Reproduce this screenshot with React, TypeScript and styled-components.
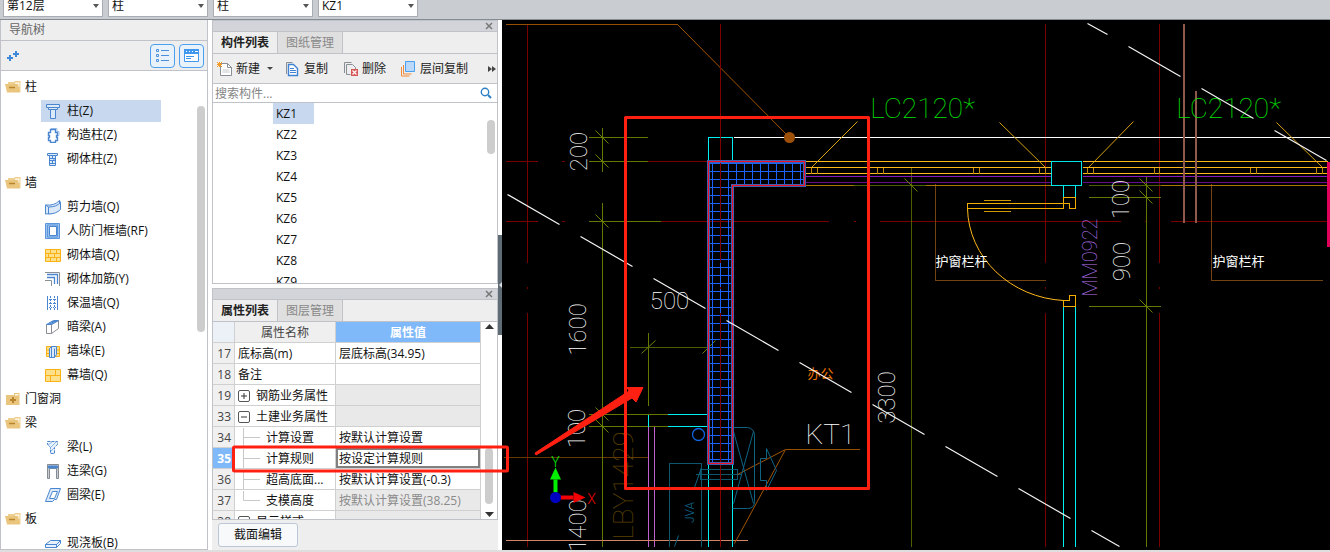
import React from "react";
import styled, { createGlobalStyle, css } from "styled-components";

const uiFont = `"Open Sans", "Noto Sans", "Noto Sans CJK SC", sans-serif`;
const cadFont = `Roboto, "Noto Sans CJK SC", sans-serif`;
const line = "#bfc2c9";

const GlobalStyle = createGlobalStyle`
  * { box-sizing: border-box; }
  body { margin: 0; background: #fff; }
  body, button, input, select, table { font-family: ${uiFont}; font-size: 12px; line-height: 16px; color: #111; }
  button { border: 0; background: none; padding: 0; margin: 0; }
  ul { list-style: none; margin: 0; padding: 0; }
  h2 { margin: 0; font-size: 12px; font-weight: 400; }
`;

/* ---------- shell ---------- */
const Shell = styled.div`
  height: 100vh;
  display: flex;
  flex-direction: column;
  overflow: hidden;
`;
const TopBar = styled.header`
  flex: 0 0 20px;
  display: flex;
  align-items: flex-end;
  gap: 5px;
  padding: 0 3px 2px;
  background: #c9ccd1;
  border-bottom: 1px solid #858b93;
  overflow: hidden;
`;
const Picker = styled.label`
  position: relative;
  flex: 0 0 100px;
  height: 22px;
`;
const Select = styled.select`
  appearance: none;
  width: 100%;
  height: 22px;
  padding: 0 16px 0 3px;
  border: 1px solid #a9acb2;
  border-radius: 0;
  background: #fff;
`;
const PickerArrow = styled.svg`
  position: absolute;
  right: 4px;
  top: 9px;
  pointer-events: none;
`;
const Main = styled.main`
  position: relative;
  flex: 1;
  min-height: 0;
  display: flex;
  border-bottom: 2px solid #dedede;
`;

/* ---------- navigation tree ---------- */
const NavPanel = styled.section`
  flex: 0 0 208px;
  display: flex;
  flex-direction: column;
  border: 1px solid ${line};
  border-top: 0;
`;
const NavTitle = styled.h2`
  flex: 0 0 21px;
  padding: 2px 8px;
  background: #eeeeee;
  border-bottom: 1px solid ${line};
  color: #666;
`;
const NavTools = styled.div`
  flex: 0 0 30px;
  display: flex;
  align-items: center;
  gap: 4px;
  padding: 0 3px 0 6px;
  background: #eeeeee;
  border-bottom: 1px solid ${line};
`;
const Spacer = styled.span`
  flex: 1;
`;
const ViewToggle = styled.button`
  width: 25px;
  height: 24px;
  display: grid;
  place-items: center;
  border: 1px solid #4a9fee;
  border-radius: 4px;
  background: #e9f2fb;
`;
const TreeArea = styled.div`
  position: relative;
  flex: 1;
  min-height: 0;
  overflow: hidden;
  padding-top: 4px;
`;
const TreeGroup = styled.div`
  display: flex;
  align-items: center;
  gap: 4px;
  height: 24px;
  padding-left: 4px;
`;
const TreeList = styled.ul`
  display: flex;
  flex-direction: column;
`;
const TreeItem = styled.li<{ $selected?: boolean }>`
  display: flex;
  align-items: center;
  gap: 6px;
  height: 22px;
  width: 120px;
  margin: 1px 0 1px 40px;
  padding-left: 4px;
  white-space: nowrap;
  background: ${(p) => (p.$selected ? "#c8d9ef" : "transparent")};
`;
const Thumb = styled.div<{ $top: number; $height: number }>`
  position: absolute;
  right: 2px;
  top: ${(p) => p.$top}px;
  width: 8px;
  height: ${(p) => p.$height}px;
  border-radius: 4px;
  background: #cdcdcd;
`;

/* ---------- docks ---------- */
const DockColumn = styled.div`
  flex: 0 0 286px;
  margin-left: 4px;
  display: flex;
  flex-direction: column;
  gap: 4px;
`;
const Dock = styled.section<{ $grow: number }>`
  flex: ${(p) => p.$grow} 1 0;
  min-height: 0;
  display: flex;
  flex-direction: column;
`;
const DockBar = styled.div`
  flex: 0 0 12px;
  display: flex;
  justify-content: flex-end;
  align-items: center;
  padding-right: 4px;
  background: #d2d4da;
  border: 1px solid ${line};
`;
const CloseButton = styled.button`
  display: flex;
`;
const Tabs = styled.div`
  flex: 0 0 22px;
  display: flex;
  background: #eeeeee;
  border: 1px solid ${line};
  border-top: 0;
`;
const Tab = styled.button<{ $active?: boolean }>`
  width: 65px;
  border-right: 1px solid ${line};
  ${(p) =>
    p.$active
      ? css`
          font-weight: 600;
          color: #222;
        `
      : css`
          color: #888;
          background: #dfdfdf;
        `}
`;
const Toolbar = styled.div`
  flex: 0 0 30px;
  display: flex;
  align-items: center;
  gap: 12px;
  padding: 0 1px 0 4px;
  background: #eeeeee;
  border: 1px solid ${line};
  border-top: 0;
`;
const ToolButton = styled.button`
  display: flex;
  align-items: center;
  gap: 3px;
  min-width: 46px;
  white-space: nowrap;
  color: #222;
`;
const MoreButton = styled.button`
  display: flex;
  margin-left: auto;
`;
const Search = styled.label`
  flex: 0 0 19px;
  display: flex;
  align-items: center;
  padding: 0 5px 0 2px;
  border: 1px solid ${line};
  border-top: 0;
`;
const SearchInput = styled.input`
  flex: 1;
  min-width: 0;
  height: 18px;
  padding: 0;
  border: 0;
  outline: 0;
  background: none;
  &::placeholder { color: #858585; opacity: 1; }
`;
const ListArea = styled.div`
  position: relative;
  flex: 1;
  min-height: 0;
  overflow: hidden;
  border: 1px solid ${line};
  border-top: 0;
`;
const ListItem = styled.li<{ $selected?: boolean }>`
  height: 21px;
  width: 41px;
  margin-left: 60px;
  padding: 3px;
  background: ${(p) => (p.$selected ? "#c8d9ef" : "transparent")};
`;

/* ---------- property grid ---------- */
const GridArea = styled.div`
  flex: 1;
  min-height: 0;
  display: flex;
  overflow: hidden;
  border: 1px solid ${line};
  border-top: 0;
`;
const Grid = styled.table`
  flex: 1;
  width: 268px;
  height: max-content;
  table-layout: fixed;
  border-collapse: separate;
  border-spacing: 0;
`;
const cellBase = css`
  height: 21px;
  padding: 2px 3px 0;
  border-right: 1px solid #d0d0d0;
  border-bottom: 1px solid #d0d0d0;
  white-space: nowrap;
  overflow: hidden;
  font-weight: 400;
`;
const HeadCell = styled.th<{ $kind: "corner" | "name" | "value" }>`
  ${cellBase}
  text-align: center;
  color: ${(p) => (p.$kind === "value" ? "#fff" : "#444")};
  background: ${(p) => ({ corner: "#ecf1f7", name: "#efefef", value: "#80b9fa" })[p.$kind]};
  font-weight: ${(p) => (p.$kind === "value" ? 600 : 400)};
`;
const NumberCell = styled.th<{ $current?: boolean }>`
  ${cellBase}
  text-align: right;
  color: ${(p) => (p.$current ? "#fff" : "#444")};
  background: ${(p) => (p.$current ? "#80b9fa" : "#f0f0f0")};
  font-weight: ${(p) => (p.$current ? 700 : 400)};
`;
const NameCell = styled.td`
  ${cellBase}
`;
const NameInner = styled.div<{ $gap: number }>`
  display: flex;
  align-items: center;
  gap: ${(p) => p.$gap}px;
  height: 18px;
`;
const ValueCell = styled.td<{ $shade?: boolean; $focus?: boolean }>`
  ${cellBase}
  color: ${(p) => (p.$shade ? "#8a8a8a" : "#111")};
  background: ${(p) => (p.$shade ? "#e9e9e9" : "#fff")};
  ${(p) => p.$focus && "box-shadow: inset 0 0 0 2px #808080;"}
`;
const Expander = styled.button`
  width: 12px;
  height: 12px;
  display: grid;
  place-items: center;
  border: 1px solid #555;
  border-radius: 2px;
  background: #fff;
`;
const GridScroll = styled.div`
  flex: 0 0 16px;
  display: flex;
  flex-direction: column;
  align-items: center;
  padding: 2px 0;
`;
const GridThumb = styled.div`
  width: 8px;
  height: 56px;
  margin: auto 0 8px;
  border-radius: 4px;
  background: #cdcdcd;
`;
const DockFooter = styled.div`
  flex: 0 0 30px;
  padding: 3px 6px;
  background: #eeeeee;
`;
const SectionButton = styled.button`
  width: 80px;
  height: 24px;
  border: 1px solid #bcc6d6;
  border-radius: 3px;
  background: #f8f9fb;
`;

/* ---------- canvas ---------- */
const Gutter = styled.div`
  flex: 0 0 4px;
  display: flex;
  align-items: center;
`;
const GutterHandle = styled.button`
  width: 4px;
  height: 100px;
  background: #5f6b75;
  display: grid;
  place-items: center;
`;
const Viewport = styled.section`
  flex: 1;
  min-width: 0;
  background: #000;
  overflow: hidden;
`;
const Drawing = styled.svg`
  display: block;
  width: 100%;
  height: 100%;
  fill: none;
`;
const CadText = styled.text<{ $size: number; $weight: number }>`
  font-family: ${cadFont};
  font-size: ${(p) => p.$size}px;
  font-weight: ${(p) => p.$weight};
  stroke: none;
  text-anchor: middle;
  dominant-baseline: central;
`;
const MarkupLayer = styled.svg`
  position: absolute;
  inset: 0;
  width: 100%;
  height: 100%;
  pointer-events: none;
`;

/* ---------- icons ---------- */
const B = "#4a86cf";
const iconArt: Record<string, React.ReactNode> = {
  column: (
    <g stroke={B} fill="#dbe9f9">
      <path d="M1.500 1.500h13v3h-13z" />
      <path d="M3.500 4.500h9v2h-9z" />
      <path d="M5.500 6.500h5v9h-5z" />
    </g>
  ),
  structural: (
    <g>
      <path d="M6 1.500h6v3h2v4h-2v4" stroke="#a8c6ec" />
      <path d="M5.500 2.500h5v3h2v3h-1v2h1v3h-2v2h-5v-2h-2v-3h1v-2h-1v-3h2z" stroke={B} fill="#fff" strokeWidth="1.400" />
    </g>
  ),
  masonryColumn: (
    <g stroke={B} fill="#dbe9f9">
      <path d="M2.500 2.500h10v2h-10z" />
      <path d="M4.500 4.500h6v10h-6z" />
      <path d="M4.500 7.500h6M4.500 9.500h6M4.500 12.500h6M7.500 4.500v3M9 7.500v2M7.500 9.500v3" />
    </g>
  ),
  shear: (
    <g stroke={B} fill="#dbe9f9">
      <path d="M.500 6q9 1 14-4.500v8Q10 15 .500 15z" />
      <path d="M.500 6l3 2v7M3.500 8q8 0 12-4.500v7Q11 15 3.500 15M14.500 1.500l1 2" />
    </g>
  ),
  frame: (
    <g>
      <path d="M.500.500h14v15h-14z" fill="#9dc3ee" stroke="#5b96dc" />
      <path d="M4.500 3.500h7v9h-7z" fill="#fff" stroke={B} />
      <path d="M2.500 2h10v12h-10z" fill="none" stroke="#5b96dc" />
    </g>
  ),
  brick: (
    <g>
      <path d="M.500 2.500h15v12h-15z" fill="#ffe08a" stroke="#f9b115" />
      <path d="M0 6.500h16M0 10.500h16M5.500 2v4M11.500 2v4M3.500 6v4M9.500 6v4M5.500 10v4M11.500 10v4" stroke="#f9b115" />
    </g>
  ),
  rebar: (
    <g fill="none">
      <path d="M0 1.500h14.500V15M0 9.500h6.500V15" stroke="#8a8f96" />
      <path d="M2 3.500h10.500V13M2 6.500h7.500V13" stroke={B} strokeWidth="1.300" />
    </g>
  ),
  insulation: (
    <g fill="none" stroke={B}>
      <path d="M2.500 1v14M12.500 1v14" />
      <path d="M5.500 1v14M9.500 1v14" strokeDasharray="2 1" />
      <path d="M2 4.500h11M2 8.500h11M2 12.500h11" strokeDasharray="1 1" />
    </g>
  ),
  hiddenBeam: (
    <g fill="#fff">
      <path d="M1.500 5.500h5v9h-5zM6.500 5.500l7-4v8l-7 5z" stroke="#8a8f96" />
      <path d="M1.500 5.500l7-4h5l-7 4zM4 4h5M6.500 2.500h5M4 5.500l7-4" stroke={B} fill="#bcd6f5" />
    </g>
  ),
  pier: (
    <g>
      <path d="M1.500 3.500h13v10h-13z" fill="#ffe08a" stroke="#f9b115" />
      <path d="M1 7h14M1 10.500h14" stroke="#f9b115" />
      <path d="M4.500 5.500l2-2h5v8l-2 3h-5z" fill="#dbe9f9" stroke={B} />
      <path d="M6.500 3.500v11M9.500 5.500v9" stroke={B} />
    </g>
  ),
  curtain: (
    <g>
      <path d="M.500 2.500h15v12h-15z" fill="#ffe08a" stroke="#f9b115" />
      <path d="M0 8.500h16M10.500 2v6M5.500 8v6" stroke="#f9b115" />
    </g>
  ),
  beam: (
    <g fill="#e7f1fc" stroke={B}>
      <path d="M2.500 2.500h10v3l-3 3v6h-4v-6l-3-3z" strokeDasharray="3 1" />
      <path d="M3 6l4-3M6 8l5-5M6 12l3-3" stroke="#8fb6e6" />
    </g>
  ),
  linkBeam: (
    <g>
      <path d="M2.500 1.500h11v14h-2v-10h-7v10h-2z" fill="#c9ccd0" stroke="#858b93" />
      <path d="M3.500 3h9v2h-9z" fill={B} stroke={B} />
    </g>
  ),
  ringBeam: (
    <g fill="#dbe9f9" stroke={B}>
      <path d="M5.500 1.500h10l-4 11h-2l-2 2h-7z" />
      <path d="M7.500 4.500h5l-3 7h-5z" fill="#fff" />
    </g>
  ),
  slab: (
    <g fill="#e7f1fc" stroke={B}>
      <path d="M.500 9.500l5-4h10l-4 4zM.500 9.500h11v3h-11zM11.500 9.500l4-4v3l-4 4z" />
    </g>
  ),
  folderOpen: (
    <g>
      <path d="M3 3h6l1-1h5.500v11H3z" fill="#f0cf8e" />
      <path d="M10 3.500h4.500V8H10z" fill="#fdf6e6" />
      <path d="M0 5h13l2 8.500H2z" fill="#eac57d" />
      <path d="M4 8.500h6" stroke="#b8842e" strokeWidth="1.500" />
    </g>
  ),
  folderClosed: (
    <g>
      <path d="M1 4h8V2h5.500v12H1z" fill="#eac57d" />
      <path d="M10 3h3.500v1.500H10z" fill="#fdf6e6" />
      <path d="M5 9h6M8 6v6" stroke="#b8842e" strokeWidth="2" />
    </g>
  ),
  newDoc: (
    <g>
      <path d="M3.500 2.500h7l4 4v8h-11z" fill="#fff" stroke="#8a8f96" />
      <path d="M10.500 2.500v4h4" fill="none" stroke="#8a8f96" />
      <path d="M5.500 9h7M5.500 11h7" stroke="#c6c9cd" />
      <path d="M0 1l5 5M5 1l-5 5M2.500 1v5M0 3.500h5" stroke="#f59a23" />
    </g>
  ),
  copy: (
    <g>
      <path d="M1.500 13V1.500h6" fill="none" stroke="#8a8f96" />
      <path d="M3.500 3.500h5l4 4v7h-9z" fill="#fff" stroke="#3f82d4" strokeWidth="1.400" />
      <path d="M5 7.500h4M5 9.500h6M5 11.500h6" stroke="#3f82d4" />
    </g>
  ),
  remove: (
    <g>
      <path d="M1.500 12V1.500h7M3.500 13.500v-10h6l3 3v2" fill="none" stroke="#8a8f96" />
      <path d="M3.500 13.500h4" stroke="#8a8f96" />
      <path d="M8 8h7v7H8z" fill="#d95656" />
      <path d="M9.500 9.500l4 4M13.500 9.500l-4 4" stroke="#fff" strokeWidth="1.200" />
    </g>
  ),
  layers: (
    <g>
      <path d="M.500 6v9h8M2.500 4v9h8" fill="none" stroke="#ef8b3c" />
      <path d="M4.500.500h9v10h-9z" fill="#b9d8fa" stroke="#4a9fee" />
    </g>
  ),
};
const Icon = ({ name }: { name: string }) => (
  <svg width="16" height="16" viewBox="0 0 16 16" fill="none" aria-hidden="true">
    {iconArt[name]}
  </svg>
);
const Triangle = ({ up, width = 9 }: { up?: boolean; width?: number }) => (
  <svg width={width} height="5" viewBox={`0 0 ${width} 5`} aria-hidden="true">
    <path d={up ? `M0 5L${width / 2} 0L${width} 5z` : `M0 0L${width / 2} 5L${width} 0z`} fill="#333" />
  </svg>
);
const Cross = () => (
  <svg width="8" height="8" viewBox="0 0 8 8" aria-hidden="true">
    <path d="M1 1l6 6M7 1l-6 6" stroke="#777" strokeWidth="1.500" />
  </svg>
);

/* ---------- data ---------- */
const pickers = [
  ["楼层", "第12层"],
  ["构件类型", "柱"],
  ["构件类别", "柱"],
  ["构件名称", "KZ1"],
];
const tree: { title: string; closed?: boolean; items: [string, string][] }[] = [
  { title: "柱", items: [["column", "柱(Z)"], ["structural", "构造柱(Z)"], ["masonryColumn", "砌体柱(Z)"]] },
  {
    title: "墙",
    items: [
      ["shear", "剪力墙(Q)"],
      ["frame", "人防门框墙(RF)"],
      ["brick", "砌体墙(Q)"],
      ["rebar", "砌体加筋(Y)"],
      ["insulation", "保温墙(Q)"],
      ["hiddenBeam", "暗梁(A)"],
      ["pier", "墙垛(E)"],
      ["curtain", "幕墙(Q)"],
    ],
  },
  { title: "门窗洞", closed: true, items: [] },
  { title: "梁", items: [["beam", "梁(L)"], ["linkBeam", "连梁(G)"], ["ringBeam", "圈梁(E)"]] },
  { title: "板", items: [["slab", "现浇板(B)"]] },
];
const components = ["KZ1", "KZ2", "KZ3", "KZ4", "KZ5", "KZ6", "KZ7", "KZ8", "KZ9"];

type Row = { no: number; name: string; value?: string; kind?: "open" | "closed" | "child" | "last"; shade?: boolean; current?: boolean };
const rows: Row[] = [
  { no: 17, name: "底标高(m)", value: "层底标高(34.95)" },
  { no: 18, name: "备注" },
  { no: 19, name: "钢筋业务属性", kind: "closed", shade: true },
  { no: 33, name: "土建业务属性", kind: "open", shade: true },
  { no: 34, name: "计算设置", value: "按默认计算设置", kind: "child" },
  { no: 35, name: "计算规则", value: "按设定计算规则", kind: "child", current: true },
  { no: 36, name: "超高底面...", value: "按默认计算设置(-0.3)", kind: "child" },
  { no: 37, name: "支模高度", value: "按默认计算设置(38.25)", kind: "last", shade: true },
  { no: 38, name: "显示样式", kind: "closed", shade: true },
];

const PropertyName = ({ row }: { row: Row }) => {
  if (row.kind === "open" || row.kind === "closed") {
    return (
      <NameInner $gap={6}>
        <Expander aria-label={row.name}>
          <svg width="8" height="8" viewBox="0 0 8 8">
            <path d={row.kind === "open" ? "M1 4h6" : "M1 4h6M4 1v6"} stroke="#333" />
          </svg>
        </Expander>
        {row.name}
      </NameInner>
    );
  }
  if (row.kind) {
    return (
      <NameInner $gap={3}>
        <svg width="25" height="20" viewBox="0 0 25 20" aria-hidden="true">
          <path d={row.kind === "last" ? "M5.500 0v9.500H22" : "M5.500 0v20M5.500 9.500H22"} fill="none" stroke="#c8c8c8" />
        </svg>
        {row.name}
      </NameInner>
    );
  }
  return <>{row.name}</>;
};

/* Drawing geometry, one path per colour and line weight. */
const range = (from: number, to: number, step: number) =>
  Array.from({ length: Math.floor((to - from) / step) + 1 }, (_, i) => from + i * step);

const hatch = [
  ...range(163, 179, 8).map((y) => `M708 ${y}H804`),
  ...range(187, 459, 8).map((y) => `M708 ${y}H732`),
  ...range(712, 728, 8).map((x) => `M${x} 163V461`),
  ...range(736, 800, 8).map((x) => `M${x} 163V184`),
].join("");

const axes = [
  ...[527, 1045, 1159].map((x) => `M${x} 23V262M${x} 286V288M${x} 312V546`),
  "M505 161H537M561 161H564M588 161H708",
  "M505 221H537M561 221H564M588 221H828M853 221H855M879 221H1120M1144 221H1146M1170 221H1330",
].join("");

const dimTicks = [
  ...[137, 161, 221, 414, 426].map((y) => `M595 ${y - 7}l13 13`),
  ...[185, 197, 306].map((y) => `M1139 ${y - 7}l13 13`),
  "M904 178l13 13M641 353l14 -13M702 353l13 -13",
].join("");

const sash = [811, 817, 877, 883, 973, 979, 1039, 1045, 1087, 1093, 1154, 1159, 1250, 1256, 1316, 1322]
  .map((x) => `M${x} 167V173`)
  .join("");

const diagonals =
  "M507 194L559 224M580 236L632 266M653 278L705 308M726 320L778 350M799 362L851 392M872 404L924 434M945 446L997 476M1018 488L1070 518M1091 530L1119 546" +
  "M1087 23L1107 34M1128 46L1180 76M1201 88L1253 118M1274 130L1326 160";

type Label = { t: string; x: number; y: number; size: number; fill: string; up?: boolean; weight?: number };
const labels: Label[] = [
  { t: "LC2120*", x: 922, y: 108, size: 28, fill: "#00e400" },
  { t: "LC2120*", x: 1228, y: 108, size: 28, fill: "#00e400" },
  { t: "500", x: 669, y: 300, size: 24, fill: "#fff" },
  { t: "KT1", x: 830, y: 434, size: 28, fill: "#fff" },
  { t: "200", x: 578, y: 151, size: 24, fill: "#fff", up: true },
  { t: "1600", x: 577, y: 329, size: 24, fill: "#fff", up: true },
  { t: "100", x: 576, y: 428, size: 24, fill: "#fff", up: true },
  { t: "1400", x: 577, y: 525, size: 24, fill: "#fff", up: true },
  { t: "3300", x: 886, y: 397, size: 24, fill: "#fff", up: true },
  { t: "100", x: 1120, y: 199, size: 24, fill: "#fff", up: true },
  { t: "900", x: 1121, y: 261, size: 24, fill: "#fff", up: true },
  { t: "MM0922", x: 1089, y: 257, size: 20, fill: "#b878f4", up: true },
  { t: "LBY1429", x: 623, y: 485, size: 28, fill: "#5c4000", up: true },
  { t: "JVA", x: 689, y: 512, size: 12, fill: "#0e6a90", up: true, weight: 300 },
  { t: "护窗栏杆", x: 961, y: 261, size: 13, fill: "#fff", weight: 400 },
  { t: "护窗栏杆", x: 1238, y: 261, size: 13, fill: "#fff", weight: 400 },
  { t: "办公", x: 820, y: 373, size: 13, fill: "#f07800", weight: 400 },
  { t: "Y", x: 555, y: 461, size: 14, fill: "#00f000", weight: 300 },
  { t: "X", x: 591, y: 498, size: 14, fill: "#f00000", weight: 300 },
];

const FloorPlan = () => (
  <Drawing role="img" aria-label="平面图">
    <g transform="translate(-501.500 -19.500)">
      <g shapeRendering="crispEdges">
        <path d={axes} stroke="#780000" />
        <path d="M503 457H648" stroke="#653800" />
        <path d="M505 24H677M785 449H859" stroke="#984e00" />
        <path d="M935 183V280H1045M1211 183V280H1322" stroke="#744210" />
        <path d="M602 127V171M602 202V546M588 137H647M588 161H647M588 221H660M588 414H667M588 426H667M648 332V405M1146 176V546M1088 197H1160M1088 306H1160" stroke="#627800" />
        <path d="M629 347H728M853 185H925M1088 185H1160M911 167V546" stroke="#4c5e00" />
        <path d="M648 426V546M654 426V546" stroke="#c060d0" />
        <path d="M505 540H747" stroke="#d08868" />
        <path d="M733 137H1330" stroke="#fff" />
        <path d="M805 161H1051M805 167H1051M805 173H1051M1082 161H1327M1082 167H1327M1082 173H1327" stroke="#ffb81c" />
        <path d={sash} stroke="#c08800" />
        <path d="M805 176H1051M1082 176H1327" stroke="#8818bc" />
        <path d="M805 182H1051M1082 182H1327" stroke="#640e8c" />
        <path d="M805 185H853M925 185H1051M1160 185H1327" stroke="#a87800" />
        <path d="M1183 23V222M1195 90V222" stroke="#8f5a4c" strokeWidth="2" />
        <path d="M1328 161V246" stroke="#e0005c" strokeWidth="3" />
        <path d="M1051 161H1081V185H1051z" fill="#000" stroke="#00e5e5" />
        <path d="M1063 185V197M1075 185V197M1063 306V546M1075 306V546M708 161V137H732V161M708 463V546M732 463V546M667 414H708M667 426H708M648 414V426" stroke="#00f0f0" />
        <path d="M1063 208V197H1075V208H1069V203H967V208H1063M1063 300H1069V295H1075V306H1063z" stroke="#f0ac00" />
        <path d="M983 200H1010M983 211H1010" stroke="#d09800" />
        <path d="M669 546V463H701V546M700 469H737V479H700zM695 474H741" stroke="#0e566e" />
      </g>
      <path d="M967 208A102 94 0 0 0 1063 300" stroke="#ffb81c" />
      <path d="M811 167L857 121M1045 167L999 122M1088 167L1133 121M1322 167L1276 122" stroke="#d8a010" />
      <path d={dimTicks} stroke="#6c8400" />
      <path d="M677 24L789 137M737 474L785 449L734 543" stroke="#a05400" />
      <circle cx="789" cy="137" r="5.500" fill="#9c5008" />
      <path d="M732 427H747Q754 428 754 435V501Q754 508 747 508H732M733 431L753 503M753 431L733 503M760 458H766V448L776 470L766 490V480H760zM701 467L694 487M678 535L674 546" stroke="#0e6482" />
      <circle cx="698" cy="434" r="6" stroke="#0f66e0" strokeWidth="1.300" />

      <g shapeRendering="crispEdges">
        <path d={hatch} stroke="#1c62ff" />
        <path d="M720 23V262M720 286V288M720 312V546" stroke="#800000" />
        <path d="M708 161H804V185H732V463H708z" stroke="#3f5fae" strokeWidth="3" />
        <path d="M708 161H804V185H732V463H708z" stroke="#f01028" />
      </g>

      {labels.map((l, i) => (
        <CadText
          key={i}
          $size={l.size}
          $weight={l.weight ?? 100}
          fill={l.fill}
          transform={`translate(${l.x} ${l.y})${l.up ? " rotate(-90)" : ""}`}
        >
          {l.t}
        </CadText>
      ))}

      <path d={diagonals} stroke="#f4f4f4" strokeWidth="1.200" />
      <path d="M555 492V479" stroke="#00f000" strokeWidth="4" />
      <path d="M549.500 479L555 467L560.500 479z" fill="#00f000" />
      <path d="M560 497H573" stroke="#f00000" strokeWidth="4" />
      <path d="M573 491.500L585 497L573 502.500z" fill="#f00000" />
      <circle cx="555" cy="497" r="5.500" fill="#0000c0" />
    </g>
  </Drawing>
);

const Markup = () => (
  <MarkupLayer aria-hidden="true">
    <g transform="translate(0 -20)" fill="none" stroke="#ff2012" strokeWidth="3" strokeLinejoin="round">
      <rect x="233.500" y="447" width="274" height="24" rx="1" />
      <rect x="625.500" y="117.500" width="243" height="371" />
      <path d="M535 453L629 391L627 387.500H643L636 402L632 398L536 455z" fill="#ff2012" strokeWidth="1" />
    </g>
  </MarkupLayer>
);

export default function App() {
  return (
    <Shell>
      <GlobalStyle />
      <TopBar>
        {pickers.map(([label, value]) => (
          <Picker key={label}>
            <Select aria-label={label} defaultValue={value}>
              <option>{value}</option>
            </Select>
            <PickerArrow width="6" height="4" viewBox="0 0 6 4">
              <path d="M0 0h6L3 4z" fill="#555" />
            </PickerArrow>
          </Picker>
        ))}
      </TopBar>
      <Main>
        <NavPanel>
          <NavTitle>导航树</NavTitle>
          <NavTools>
            <svg width="13" height="12" viewBox="0 0 13 12" aria-hidden="true">
              <path d="M0 8h6M3 5v6M6 4h6M9 1v6" stroke="#3f8ad8" strokeWidth="2" />
            </svg>
            <Spacer />
            <ViewToggle aria-label="列表视图">
              <svg width="13" height="14" viewBox="0 0 13 14">
                <path d="M.500.500h2v2h-2zM.500 5.500h2v2h-2zM.500 10.500h2v2h-2zM5 1.500h8M5 6.500h8M5 11.500h8" fill="none" stroke="#4a90dc" />
              </svg>
            </ViewToggle>
            <ViewToggle aria-label="窗口视图">
              <svg width="15" height="14" viewBox="0 0 15 14">
                <path d="M.500.500h14v12h-14z" fill="#fff" stroke="#3f97ee" />
                <path d="M0 0h15v5H0z" fill="#3f97ee" />
                <path d="M2 7.500h8M2 9.500h5" stroke="#3f97ee" />
                <path d="M2 2.500h1M5 2.500h1M8 2.500h1M11 2.500h3" stroke="#fff" />
              </svg>
            </ViewToggle>
          </NavTools>
          <TreeArea>
            {tree.map((group) => (
              <React.Fragment key={group.title}>
                <TreeGroup>
                  <Icon name={group.closed ? "folderClosed" : "folderOpen"} />
                  {group.title}
                </TreeGroup>
                <TreeList>
                  {group.items.map(([icon, label]) => (
                    <TreeItem key={label} $selected={icon === "column"}>
                      <Icon name={icon} />
                      {label}
                    </TreeItem>
                  ))}
                </TreeList>
              </React.Fragment>
            ))}
            <Thumb $top={35} $height={226} />
          </TreeArea>
        </NavPanel>

        <DockColumn>
          <Dock $grow={264}>
            <DockBar>
              <CloseButton aria-label="关闭构件列表"><Cross /></CloseButton>
            </DockBar>
            <Tabs>
              <Tab $active>构件列表</Tab>
              <Tab>图纸管理</Tab>
            </Tabs>
            <Toolbar>
              <ToolButton>
                <Icon name="newDoc" />
                新建
                <svg width="10" height="4" viewBox="0 0 10 4" aria-hidden="true">
                  <path d="M4 0h6L7 3z" fill="#444" />
                </svg>
              </ToolButton>
              <ToolButton><Icon name="copy" />复制</ToolButton>
              <ToolButton><Icon name="remove" />删除</ToolButton>
              <ToolButton><Icon name="layers" />层间复制</ToolButton>
              <MoreButton aria-label="更多">
                <svg width="8" height="6" viewBox="0 0 8 6"><path d="M0 0l4 3-4 3zM4 0l4 3-4 3z" fill="#444" /></svg>
              </MoreButton>
            </Toolbar>
            <Search>
              <SearchInput placeholder="搜索构件..." aria-label="搜索构件" />
              <svg width="12" height="12" viewBox="0 0 12 12" aria-hidden="true">
                <circle cx="5" cy="5" r="3.700" fill="none" stroke="#2b7fc4" strokeWidth="1.400" />
                <path d="M8 8l3 3" stroke="#2b7fc4" strokeWidth="2" />
              </svg>
            </Search>
            <ListArea>
              <ul>
                {components.map((name, i) => (
                  <ListItem key={name} $selected={i === 0}>{name}</ListItem>
                ))}
              </ul>
              <Thumb $top={17} $height={34} />
            </ListArea>
          </Dock>

          <Dock $grow={262}>
            <DockBar>
              <CloseButton aria-label="关闭属性列表"><Cross /></CloseButton>
            </DockBar>
            <Tabs>
              <Tab $active>属性列表</Tab>
              <Tab>图层管理</Tab>
            </Tabs>
            <GridArea>
              <Grid>
                <colgroup>
                  <col width="22" />
                  <col width="101" />
                  <col width="145" />
                </colgroup>
                <thead>
                  <tr>
                    <HeadCell $kind="corner" />
                    <HeadCell $kind="name" scope="col">属性名称</HeadCell>
                    <HeadCell $kind="value" scope="col">属性值</HeadCell>
                  </tr>
                </thead>
                <tbody>
                  {rows.map((row) => (
                    <tr key={row.no}>
                      <NumberCell scope="row" $current={row.current}>{row.no}</NumberCell>
                      <NameCell><PropertyName row={row} /></NameCell>
                      <ValueCell $shade={row.shade} $focus={row.current}>{row.value}</ValueCell>
                    </tr>
                  ))}
                </tbody>
              </Grid>
              <GridScroll>
                <Triangle up />
                <GridThumb />
                <Triangle />
              </GridScroll>
            </GridArea>
            <DockFooter>
              <SectionButton>截面编辑</SectionButton>
            </DockFooter>
          </Dock>
        </DockColumn>

        <Gutter>
          <GutterHandle aria-label="折叠面板">
            <svg width="3" height="6" viewBox="0 0 3 6"><path d="M3 0v6L0 3z" fill="#d8dce0" /></svg>
          </GutterHandle>
        </Gutter>
        <Viewport>
          <FloorPlan />
        </Viewport>
        <Markup />
      </Main>
    </Shell>
  );
}
